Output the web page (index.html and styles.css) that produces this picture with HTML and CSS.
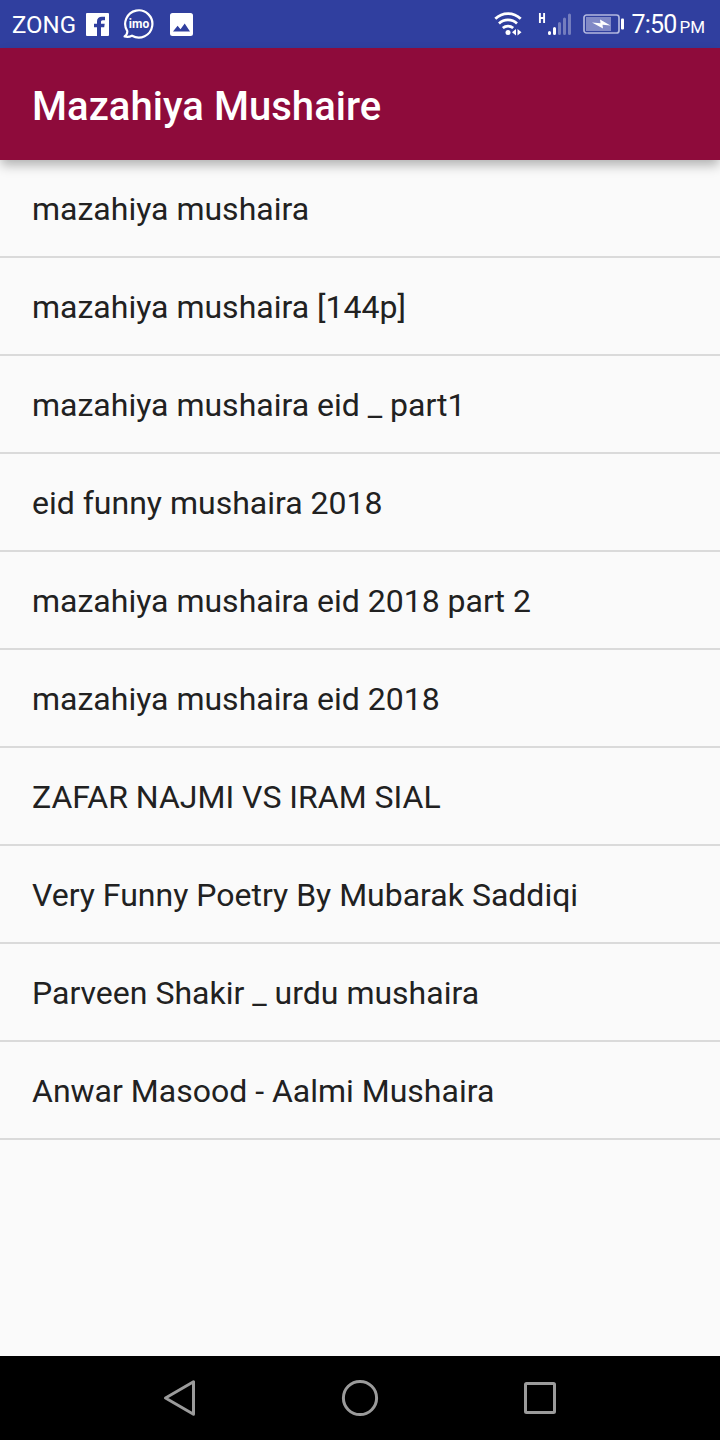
FILE: index.html
```
<!DOCTYPE html>
<html lang="en">
<head>
    <meta charset="UTF-8">
    <meta name="viewport" content="width=device-width, initial-scale=1.0">
    <title>Mazahiya Mushaire</title>
    <link rel="stylesheet" href="styles.css">
</head>
<body>
    <div class="status-bar">
        <div class="status-left">
            <span class="carrier">ZONG</span>
            <svg class="icon-facebook" width="23" height="23" viewBox="0 0 23 23">
                <path fill="#fff" d="M1 0h21a1 1 0 0 1 1 1v21a1 1 0 0 1-1 1h-7v-8.800h3.200l.5-3.500H15V9c0-1 .4-1.800 1.800-1.800H19V3.700h-3c-3.300 0-5 1.800-5 4.800v2.200H8v3.500h3V23H1a1 1 0 0 1-1-1V1a1 1 0 0 1 1-1z"/>
            </svg>
            <svg class="icon-imo" width="32" height="32" viewBox="0 0 32 32">
                <path fill="none" stroke="#fff" stroke-width="2.200" stroke-linejoin="round" d="M5.300 23.200A13.600 13.600 0 1 1 10 27.700C7.500 29 5 29.200 2.600 28.500c1.800-1.200 2.800-3 2.700-5.300z"/>
                <text x="17" y="19.600" text-anchor="middle">imo</text>
            </svg>
            <svg class="icon-picture" width="23" height="23" viewBox="0 0 23 23">
                <path fill="#fff" fill-rule="evenodd" d="M2.500 0h18A2.500 2.500 0 0 1 23 2.500v18a2.500 2.500 0 0 1-2.500 2.500h-18A2.500 2.500 0 0 1 0 20.500v-18A2.500 2.500 0 0 1 2.500 0zM3 18.500h17l-5.300-8-4.200 5.700-2.900-3.400z"/>
            </svg>
        </div>
        <div class="status-right">
            <svg class="icon-wifi" width="30" height="24" viewBox="0 0 30 24">
                <g fill="none" stroke="#fff" stroke-width="2.700">
                    <path d="M1.300 6.800a18 18 0 0 1 25.400 0"/>
                    <path d="M5 11.500a13 13 0 0 1 18 0"/>
                    <path d="M8.800 16a8 8 0 0 1 10.400 0"/>
                </g>
                <circle cx="14" cy="20.400" r="2.500" fill="#fff"/>
                <path fill="#fff" d="M22 17v6.500L18 20.300zM23.500 17v6.500l4-3.200z"/>
            </svg>
            <svg class="icon-signal" width="34" height="24" viewBox="0 0 34 24">
                <path fill="none" stroke="#fff" stroke-width="1.900" d="M1.900 1v10M6.100 1v10M2 6h4"/>
                <g stroke-width="3" stroke-linecap="round">
                    <path stroke="#fff" d="M11.500 20.500v1M16.500 16.500v5"/>
                    <path stroke="#747dbe" d="M21.500 11.500v10M26.500 7v14.500M31.500 3v18.500"/>
                </g>
            </svg>
            <svg class="icon-battery" width="42" height="20" viewBox="0 0 42 20">
                <rect x="1" y="1" width="35" height="18" rx="2.500" fill="none" stroke="#b2b8df" stroke-width="1.700"/>
                <rect x="3" y="3" width="25" height="14" fill="#8189c6"/>
                <path fill="#fff" d="M9 8.500l8.500.800L17 5.500l10.500 6-8-.7.500 3.700z"/>
                <rect x="38" y="4.500" width="3" height="11" rx="1" fill="#fff"/>
            </svg>
            <span class="clock">7:50</span>
            <span class="meridiem">PM</span>
        </div>
    </div>

    <header class="toolbar">
        <h1>Mazahiya Mushaire</h1>
    </header>

    <ul class="video-list">
        <li>mazahiya mushaira</li>
        <li>mazahiya mushaira [144p]</li>
        <li>mazahiya mushaira eid _ part1</li>
        <li>eid funny mushaira 2018</li>
        <li>mazahiya mushaira eid 2018 part 2</li>
        <li>mazahiya mushaira eid 2018</li>
        <li>ZAFAR NAJMI VS IRAM SIAL</li>
        <li>Very Funny Poetry By Mubarak Saddiqi</li>
        <li>Parveen Shakir _ urdu mushaira</li>
        <li>Anwar Masood - Aalmi Mushaira</li>
    </ul>

    <nav class="nav-bar">
        <svg width="40" height="40" viewBox="0 0 40 40">
            <path d="M5.500 20L33.500 3.800v32.400z"/>
        </svg>
        <svg width="40" height="40" viewBox="0 0 40 40">
            <circle cx="20" cy="20" r="16.600"/>
        </svg>
        <svg width="40" height="40" viewBox="0 0 40 40">
            <rect x="5.500" y="5.500" width="29" height="29" rx="1"/>
        </svg>
    </nav>
</body>
</html>
```
FILE: styles.css
```
* {
    margin: 0;
    padding: 0;
    box-sizing: border-box;
}

body {
    font-family: Roboto, "Liberation Sans", sans-serif;
    background: #fafafa;
    color: #212121;
    display: flex;
    flex-direction: column;
    height: 100vh;
    overflow: hidden;
}

.status-bar {
    height: 48px;
    padding: 0 15px 0 12px;
    background: #303f9f;
    color: #fff;
    display: flex;
    justify-content: space-between;
    flex-shrink: 0;
}

.status-left,
.status-right {
    display: flex;
    align-items: center;
}

.carrier {
    width: 74px;
    font-size: 24px;
    line-height: 48px;
    padding-top: 1px;
}

.icon-imo {
    margin-left: 13px;
}

.icon-imo text {
    font-size: 12px;
    font-weight: 700;
    fill: #fff;
}

.icon-picture {
    margin-left: 16px;
}

.icon-signal {
    margin-left: 14px;
}

.icon-battery {
    margin-left: 11px;
}

.clock {
    width: 45px;
    margin-left: 6px;
    font-size: 25px;
    letter-spacing: -0.8px;
    line-height: 48px;
    padding-top: 1px;
}

.meridiem {
    margin-left: 3px;
    font-size: 17px;
    line-height: 48px;
    padding-top: 5px;
}

.toolbar {
    height: 112px;
    padding: 4px 32px 0;
    background: #8e0b3b;
    color: #fff;
    display: flex;
    align-items: center;
    flex-shrink: 0;
    position: relative;
    box-shadow: 0 6px 11px -1px rgba(0, 0, 0, 0.3);
}

h1 {
    font-size: 40px;
    font-weight: 500;
    letter-spacing: 0.05px;
}

.video-list {
    flex: 1;
    list-style: none;
}

.video-list li {
    height: 98px;
    padding: 0 32px;
    border-bottom: 2px solid #dadada;
    font-size: 32px;
    line-height: 98px;
    white-space: nowrap;
}

.nav-bar {
    height: 84px;
    background: #000;
    display: flex;
    justify-content: center;
    align-items: center;
    gap: 140px;
    flex-shrink: 0;
}

.nav-bar svg {
    fill: none;
    stroke: #9b9b9b;
    stroke-width: 3;
    stroke-linejoin: round;
}
```
